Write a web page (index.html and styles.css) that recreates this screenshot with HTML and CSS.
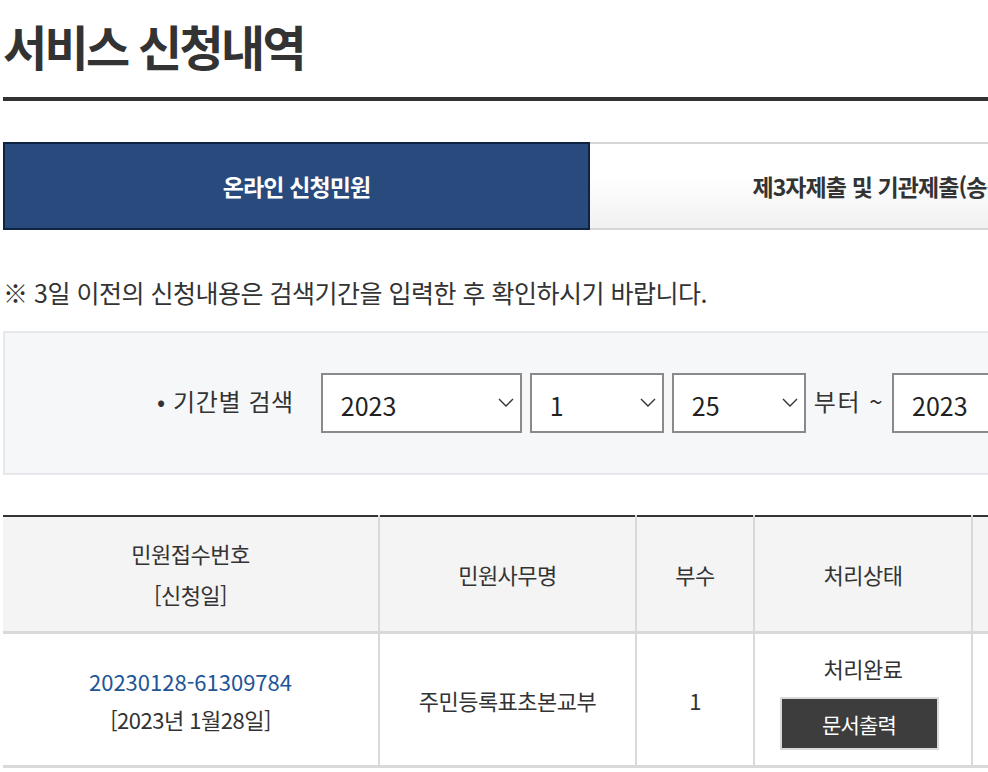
FILE: index.html
```html
<!DOCTYPE html>
<html lang="ko">
<head>
<meta charset="utf-8">
<title>서비스 신청내역</title>
<link rel="stylesheet" href="styles.css">
</head>
<body>
<div class="page">
  <h1 class="title">서비스 신청내역</h1>
  <div class="tabs">
    <a class="tab tab-active" href="#">온라인 신청민원</a>
    <a class="tab" href="#">제3자제출 및 기관제출(송신)</a>
  </div>
  <p class="notice">※ 3일 이전의 신청내용은 검색기간을 입력한 후 확인하시기 바랍니다.</p>
  <div class="search">
    <span class="search-label">• 기간별 검색</span>
    <div class="sel sel-year">
      <select><option>2023</option></select>
      <svg class="chev" width="16" height="9" viewBox="0 0 16 9"><path d="M1 1 L8 8 L15 1" fill="none" stroke="#333" stroke-width="1.4"/></svg>
    </div>
    <div class="sel sel-small">
      <select><option>1</option></select>
      <svg class="chev" width="16" height="9" viewBox="0 0 16 9"><path d="M1 1 L8 8 L15 1" fill="none" stroke="#333" stroke-width="1.4"/></svg>
    </div>
    <div class="sel sel-small">
      <select><option>25</option></select>
      <svg class="chev" width="16" height="9" viewBox="0 0 16 9"><path d="M1 1 L8 8 L15 1" fill="none" stroke="#333" stroke-width="1.4"/></svg>
    </div>
    <span class="search-text">부터 ~</span>
    <div class="sel sel-year">
      <select><option>2023</option></select>
      <svg class="chev" width="16" height="9" viewBox="0 0 16 9"><path d="M1 1 L8 8 L15 1" fill="none" stroke="#333" stroke-width="1.4"/></svg>
    </div>
  </div>
  <table class="list">
    <colgroup>
      <col class="c1"><col class="c2"><col class="c3"><col class="c4"><col class="c5">
    </colgroup>
    <thead>
      <tr>
        <th>민원접수번호<br>[신청일]</th>
        <th>민원사무명</th>
        <th>부수</th>
        <th>처리상태</th>
        <th></th>
      </tr>
    </thead>
    <tbody>
      <tr>
        <td class="num"><a href="#">20230128-61309784</a><br>[2023년 1월28일]</td>
        <td>주민등록표초본교부</td>
        <td>1</td>
        <td class="status">처리완료<br><button class="print">문서출력</button></td>
        <td></td>
      </tr>
    </tbody>
  </table>
</div>
</body>
</html>
```

FILE: styles.css
```css
html, body {
  margin: 0;
  padding: 0;
  background: #fff;
  overflow: hidden;
}
body {
  font-family: "Noto Sans CJK KR", "Noto Sans", sans-serif;
  color: #333;
}
.page {
  width: 1177px;
  padding-left: 3px;
}
.title {
  margin: 0;
  padding: 12px 0 0 0;
  height: 101px;
  box-sizing: border-box;
  font-size: 48px;
  line-height: 66px;
  font-weight: 700;
  letter-spacing: -2.7px;
  color: #333;
  border-bottom: 4px solid #333;
}
.tabs {
  display: flex;
  margin-top: 41px;
  height: 88px;
}
.tab {
  flex: 0 0 587px;
  display: flex;
  align-items: center;
  justify-content: center;
  text-decoration: none;
  font-size: 23px;
  font-weight: 700;
  letter-spacing: -0.9px;
  color: #333;
  box-sizing: border-box;
  border-top: 2px solid #d6d6d6;
  border-bottom: 2px solid #d6d6d6;
  background: linear-gradient(#ffffff 40%, #f1f1f1 100%);
  white-space: nowrap;
}
.tab-active {
  background: #284a7c;
  color: #fff;
  border: 2px solid #0e2440;
}
.notice {
  margin: 45px 0 0 0;
  font-size: 25px;
  line-height: 34px;
  letter-spacing: -0.5px;
  color: #333;
  white-space: nowrap;
}
.search {
  margin-top: 22px;
  height: 144px;
  box-sizing: border-box;
  background: #f6f7f9;
  border: 2px solid #e6e7eb;
  display: flex;
  align-items: center;
  padding-left: 152px;
  gap: 8px;
}
.search-label, .search-text {
  flex: none;
  white-space: nowrap;
  font-size: 24px;
  letter-spacing: 0.6px;
  margin-top: -6px;
}
.search-label {
  margin-right: 19px;
}
.search-text {
  letter-spacing: 1.5px;
}
.sel {
  position: relative;
  height: 60px;
  flex: none;
}
.sel-year { width: 201px; }
.sel-small { width: 134px; }
.sel select {
  appearance: none;
  -webkit-appearance: none;
  width: 100%;
  height: 100%;
  box-sizing: border-box;
  border: 2px solid #8a8a8a;
  border-radius: 0;
  background: #fff;
  font-family: "Noto Sans CJK KR", "Noto Sans", sans-serif;
  font-size: 25px;
  letter-spacing: 0;
  color: #222;
  padding: 4px 0 0 18px;
}
.chev {
  position: absolute;
  right: 8px;
  top: 25px;
}
.list {
  margin-top: 40px;
  border-collapse: collapse;
  table-layout: fixed;
  width: 1174px;
  border-top: 2px solid #333;
}
.c1 { width: 376px; }
.c2 { width: 257px; }
.c3 { width: 118px; }
.c4 { width: 218px; }
.c5 { width: 205px; }
.list th, .list td {
  text-align: center;
  vertical-align: middle;
  font-size: 22px;
  letter-spacing: -0.5px;
  color: #333;
  border-left: 2px solid #d9d9d9;
  font-weight: 400;
}
.list th:first-child, .list td:first-child { border-left: 0; }
.list th {
  background: #f4f4f4;
  height: 114px;
  line-height: 41px;
  border-bottom: 3px solid #d9d9d9;
  padding: 0;
}
.list td {
  height: 131px;
  line-height: 38px;
  border-bottom: 3px solid #d9d9d9;
  padding: 0;
}
.num a {
  color: #1f5596;
  text-decoration: none;
  letter-spacing: 0;
}
.status { line-height: 30px; }
.print {
  margin-top: 10px;
  margin-right: 8px;
  width: 159px;
  height: 53px;
  background: #3d3d3d;
  border: 2px solid #d9d9d9;
  color: #fff;
  font-family: "Noto Sans CJK KR", "Noto Sans", sans-serif;
  font-size: 21px;
  letter-spacing: -0.8px;
  padding: 0;
}
```
